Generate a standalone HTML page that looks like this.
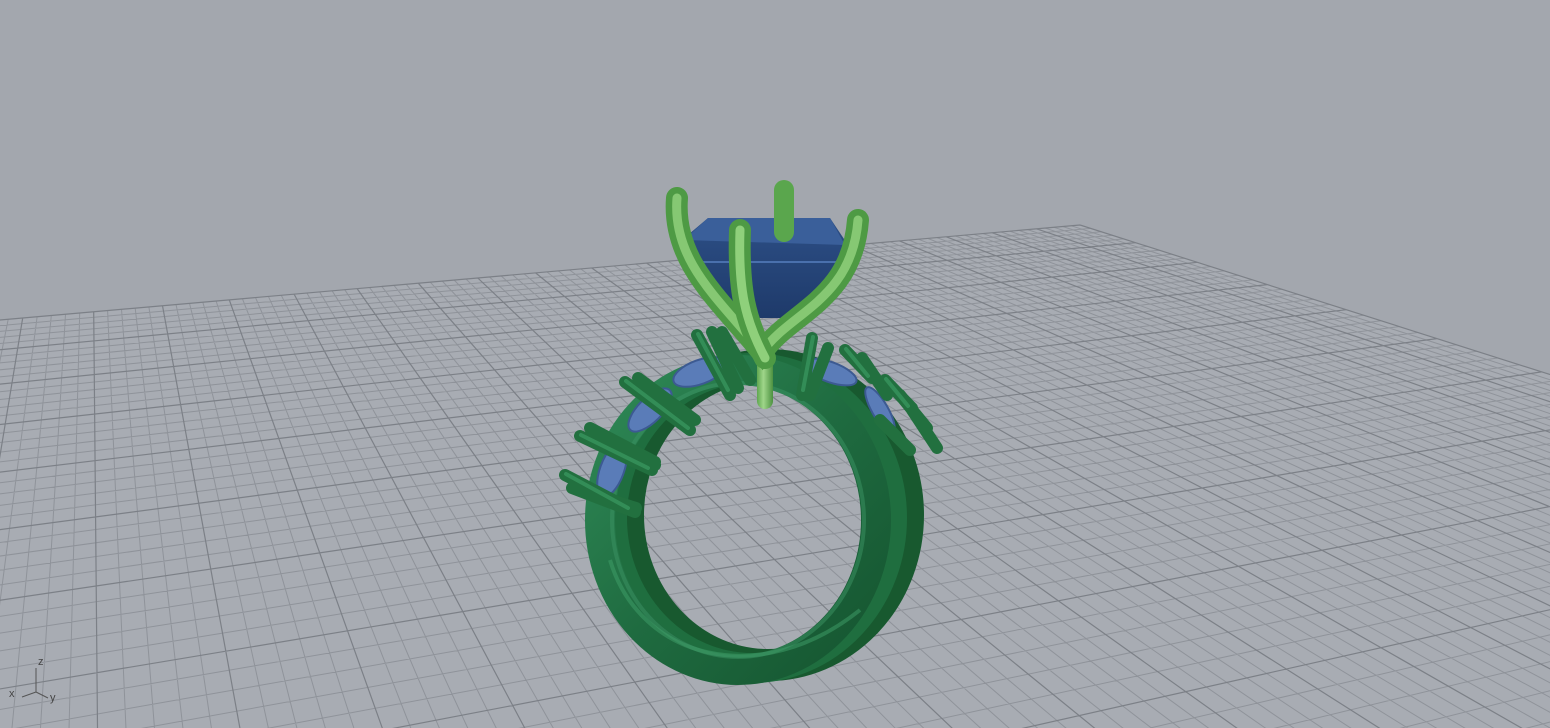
<!DOCTYPE html>
<html><head><meta charset="utf-8"><style>
html,body{margin:0;padding:0;background:#a3a7ae;overflow:hidden;width:1550px;height:728px;position:relative}
svg{display:block;position:absolute;left:0;top:0}
text{font-family:"Liberation Sans",sans-serif;font-size:11px;fill:#444}
</style></head><body>
<svg id="s" width="1550" height="728" viewBox="0 0 1550 728" xmlns="http://www.w3.org/2000/svg">
<defs>
<linearGradient id="gb" x1="0" y1="0" x2="1" y2="1">
<stop offset="0" stop-color="#2f8a57"/><stop offset="0.5" stop-color="#1f6b40"/><stop offset="1" stop-color="#155530"/>
</linearGradient>
<linearGradient id="lg" x1="0" y1="0" x2="1" y2="0">
<stop offset="0" stop-color="#5fa64f"/><stop offset="0.4" stop-color="#9fd68a"/><stop offset="1" stop-color="#4c9140"/>
</linearGradient>
<linearGradient id="st" x1="0" y1="0" x2="0" y2="1">
<stop offset="0" stop-color="#2d4f86"/><stop offset="1" stop-color="#1e3a6a"/>
</linearGradient>
</defs>
<rect width="1550" height="728" fill="#a3a7ae"/>
<g id="grid"></g>
<ellipse cx="768" cy="515" rx="140" ry="150" fill="none" stroke="#18592f" stroke-width="32"/>
<ellipse cx="752" cy="518" rx="140" ry="150" fill="none" stroke="#1f6e3f" stroke-width="30"/>
<ellipse cx="738" cy="520" rx="138" ry="150" fill="none" stroke="url(#gb)" stroke-width="30"/>
<ellipse cx="738" cy="520" rx="126" ry="137" fill="none" stroke="#3b9463" stroke-width="4" opacity="0.5"/>
<path d="M610 560 C640 660 760 690 860 610" fill="none" stroke="#3fa06a" stroke-width="4" opacity="0.5"/>
<g fill="#5a7cb8" stroke="#3c5a92" stroke-width="2">
<ellipse cx="612" cy="470" rx="12" ry="28" transform="rotate(20 612 470)"/>
<ellipse cx="650" cy="410" rx="12" ry="28" transform="rotate(45 650 410)"/>
<ellipse cx="700" cy="372" rx="12" ry="28" transform="rotate(70 700 372)"/>
<ellipse cx="830" cy="372" rx="10" ry="28" transform="rotate(-70 830 372)"/>
<ellipse cx="880" cy="410" rx="8" ry="26" transform="rotate(-30 880 410)"/>
</g>
<g stroke="#22703f" stroke-width="12" stroke-linecap="round" fill="none">
<path d="M565 475 L632 510 M572 488 L635 512 M580 490 L636 508 M580 436 L652 470 M590 428 L655 462 M600 440 L655 465 M625 382 L690 430 M638 378 L695 420 M650 395 L690 430 M697 335 L730 395 M712 332 L738 388 M722 332 L750 380 M812 338 L802 395 M828 348 L810 395 M845 350 L872 378 M862 358 L887 395 M885 380 L912 408 M900 395 L927 428 M912 410 L937 448 M880 420 L910 450"/>
</g>
<g stroke="#3a9a62" stroke-width="4" stroke-linecap="round" fill="none" opacity="0.7">
<path d="M566 474 L628 508 M581 435 L648 468 M626 381 L688 428 M698 334 L728 390 M813 337 L803 390 M846 349 L868 376 M886 379 L908 406"/>
</g>
<rect x="757" y="345" width="16" height="64" rx="8" fill="url(#lg)"/>
<path d="M682 240 L708 218 L830 218 L848 245 L840 290 L810 318 L735 318 L705 280 Z" fill="url(#st)"/>
<path d="M708 218 L830 218 L845 245 L684 240 Z" fill="#3a5f9a"/>
<path d="M700 262 L845 262" stroke="#4a70ad" stroke-width="2"/>
<g fill="none" stroke-linecap="round">
<path d="M784 190 L784 232" stroke="#5aa64d" stroke-width="20"/>
<path d="M677 198 C672 262 720 300 762 352 C790 312 852 300 858 220" stroke="#4e9a44" stroke-width="22"/>
<path d="M677 198 C672 262 720 300 762 352 C790 312 852 300 858 220" stroke="#86c873" stroke-width="9"/>
<path d="M740 230 C738 290 745 320 765 358" stroke="#4e9a44" stroke-width="22"/>
<path d="M740 230 C738 290 745 320 765 358" stroke="#8fd07b" stroke-width="9"/>
</g>
<g stroke="#555" stroke-width="1" fill="none"><path d="M36 692 V668 M36 692 L22 697 M36 692 L48 698"/></g>
<text x="38" y="665">z</text><text x="9" y="697">x</text><text x="50" y="701">y</text>
</svg>
<script>
(function(){
var a=-0.0024,b=-0.0106,B=[1080,225],VA=[4660,-90],VB=[90,-90];
function P(u,v){var w=1+a*u+b*v;return [(B[0]+a*u*VA[0]+b*v*VB[0])/w,(B[1]+a*u*VA[1]+b*v*VB[1])/w];}
var NS='http://www.w3.org/2000/svg';
var g=document.getElementById('grid');
var U=380,V=88;
function vmax(u){return Math.min(V,(0.97+a*u)/(-b));}
function umax(v){return Math.min(U,(0.97+b*v)/(-a));}
var p1=P(0,0),p2=P(umax(0),0),p3=P(0,vmax(0));
var pg=document.createElementNS(NS,'polygon');
pg.setAttribute('points',p2[0]+','+p2[1]+' '+p1[0]+','+p1[1]+' '+p3[0]+','+p3[1]+' 3000,3000 -3000,3000');
pg.setAttribute('fill','#a8acb3');g.appendChild(pg);
var dMin='',dMaj='';
function seg(s,e){return 'M'+s[0].toFixed(1)+' '+s[1].toFixed(1)+'L'+e[0].toFixed(1)+' '+e[1].toFixed(1);}
for(var u=0;u<=U;u++){var vm=vmax(u);if(vm<=0)break;var q=seg(P(u,0),P(u,vm));if(u%5==0)dMaj+=q;else dMin+=q;}
for(var v=0;v<=V;v++){var um=umax(v);if(um<=0)break;var q=seg(P(0,v),P(um,v));if(v%5==0)dMaj+=q;else dMin+=q;}
function pth(d,c,w){var p=document.createElementNS(NS,'path');p.setAttribute('d',d);p.setAttribute('stroke',c);p.setAttribute('stroke-width',w);p.setAttribute('fill','none');g.appendChild(p);}
pth(dMin,'#8f939a',1);
pth(dMaj,'#7c8087',1.2);
})();
</script>
</body></html>
